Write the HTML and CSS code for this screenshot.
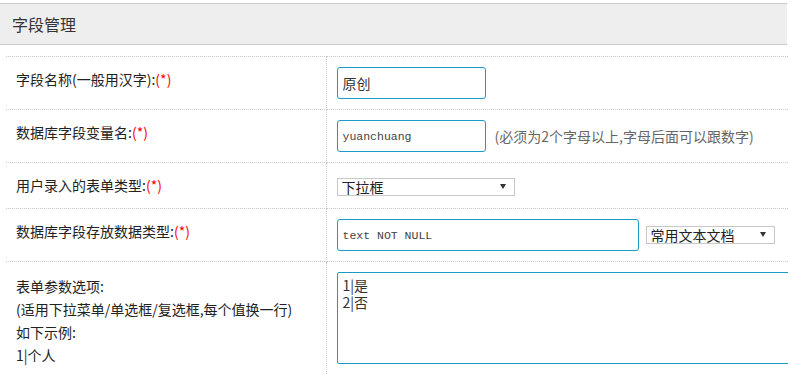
FILE: index.html
```html
<!DOCTYPE html>
<html lang="zh-CN">
<head>
<meta charset="utf-8">
<title>字段管理</title>
<link rel="stylesheet" href="styles.css">
</head>
<body>
<div class="page">
  <div class="panel-head">字段管理</div>
  <table class="form-table">
    <colgroup><col class="col-label"><col class="col-field"></colgroup>
    <tr>
      <td class="label">字段名称(一般用汉字):<span class="req">(*)</span></td>
      <td class="field"><input class="text-input short" type="text" value="原创"></td>
    </tr>
    <tr>
      <td class="label">数据库字段变量名:<span class="req">(*)</span></td>
      <td class="field"><div class="inline gap-hint"><input class="text-input short mono" type="text" value="yuanchuang"><span class="hint">(必须为2个字母以上,字母后面可以跟数字)</span></div></td>
    </tr>
    <tr>
      <td class="label">用户录入的表单类型:<span class="req">(*)</span></td>
      <td class="field"><span class="select-wrap wide"><select><option>下拉框</option></select></span></td>
    </tr>
    <tr>
      <td class="label">数据库字段存放数据类型:<span class="req">(*)</span></td>
      <td class="field"><div class="inline gap-select"><input class="text-input long mono" type="text" value="text NOT NULL"><span class="select-wrap narrow"><select><option>常用文本文档</option></select></span></div></td>
    </tr>
    <tr>
      <td class="label multi">表单参数选项:<br>(适用下拉菜单/单选框/复选框,每个值换一行)<br>如下示例:<br>1|个人</td>
      <td class="field top"><textarea class="options">1|是
2|否</textarea></td>
    </tr>
  </table>
</div>
</body>
</html>
```
FILE: styles.css
```css
html, body {
  margin: 0;
  padding: 0;
  overflow: hidden;
  background: #fff;
}
body {
  font-family: "Noto Sans CJK SC", "Noto Sans", sans-serif;
  font-size: 14px;
  color: #333;
}
.panel-head {
  margin: 3px 1px 0 0;
  height: 40px;
  line-height: 40px;
  background: #eeeeee;
  border-top: 1px solid #cccccc;
  border-bottom: 1px solid #cccccc;
  padding-left: 12px;
  font-size: 16px;
  color: #333;
}
.form-table {
  margin: 11px 0 0 6px;
  border-collapse: collapse;
  table-layout: fixed;
  width: 1000px;
}
.col-label { width: 320px; }
.form-table td {
  border-top: 1px dotted #c8c8c8;
  border-bottom: 1px dotted #c8c8c8;
}
.label {
  border-right: 1px dotted #c8c8c8;
  padding: 10px 10px;
  line-height: 25px;
  vertical-align: top;
  color: #222;
  white-space: nowrap;
}
.label.multi {
  padding-top: 13px;
  line-height: 23px;
}
.req { color: #ff0000; }
.field {
  padding: 10px 10px;
  vertical-align: middle;
}
.field.top { vertical-align: top; }
.inline {
  display: flex;
  align-items: center;
}
.gap-hint { gap: 9px; }
.gap-select { gap: 7px; }
.text-input {
  display: block;
  box-sizing: border-box;
  height: 32px;
  border: 1px solid #1a9bc6;
  border-radius: 3px;
  padding: 0 5px;
  font-family: "Noto Sans CJK SC", "Noto Sans", sans-serif;
  font-size: 14px;
  color: #333;
  outline: none;
  background: #fff;
}
.text-input.short { width: 149px; }
.text-input.long { width: 302px; }
.text-input.mono {
  font-family: "Liberation Mono", "DejaVu Sans Mono", monospace;
  font-size: 11.5px;
  color: #444;
}
.hint { color: #666; white-space: nowrap; }
.select-wrap {
  position: relative;
  display: inline-block;
  box-sizing: border-box;
  height: 18px;
  border: 1px solid #c8c8c8;
  background: #fff;
  vertical-align: middle;
  overflow: hidden;
}
.select-wrap.wide { width: 178px; }
.select-wrap.narrow { width: 129px; }
.select-wrap select {
  -webkit-appearance: none;
  appearance: none;
  display: block;
  border: 0;
  background: transparent;
  width: 100%;
  height: 16px;
  margin: 0;
  padding: 0 0 0 4px;
  font-family: "Noto Sans CJK SC", "Noto Sans", sans-serif;
  font-size: 14px;
  line-height: 16px;
  color: #222;
  outline: none;
}
.select-wrap::after {
  content: "";
  position: absolute;
  right: 8px;
  top: 5px;
  width: 0;
  height: 0;
  border-left: 3px solid transparent;
  border-right: 3px solid transparent;
  border-top: 5px solid #333;
}
.options {
  display: block;
  box-sizing: border-box;
  width: 600px;
  height: 92px;
  border: 1px solid #1a9bc6;
  border-radius: 2px;
  padding: 4px 5px;
  font-family: "Noto Sans CJK SC", "Noto Sans", sans-serif;
  font-size: 14px;
  line-height: 17px;
  color: #333;
  resize: none;
  outline: none;
  margin: 0;
}
```
